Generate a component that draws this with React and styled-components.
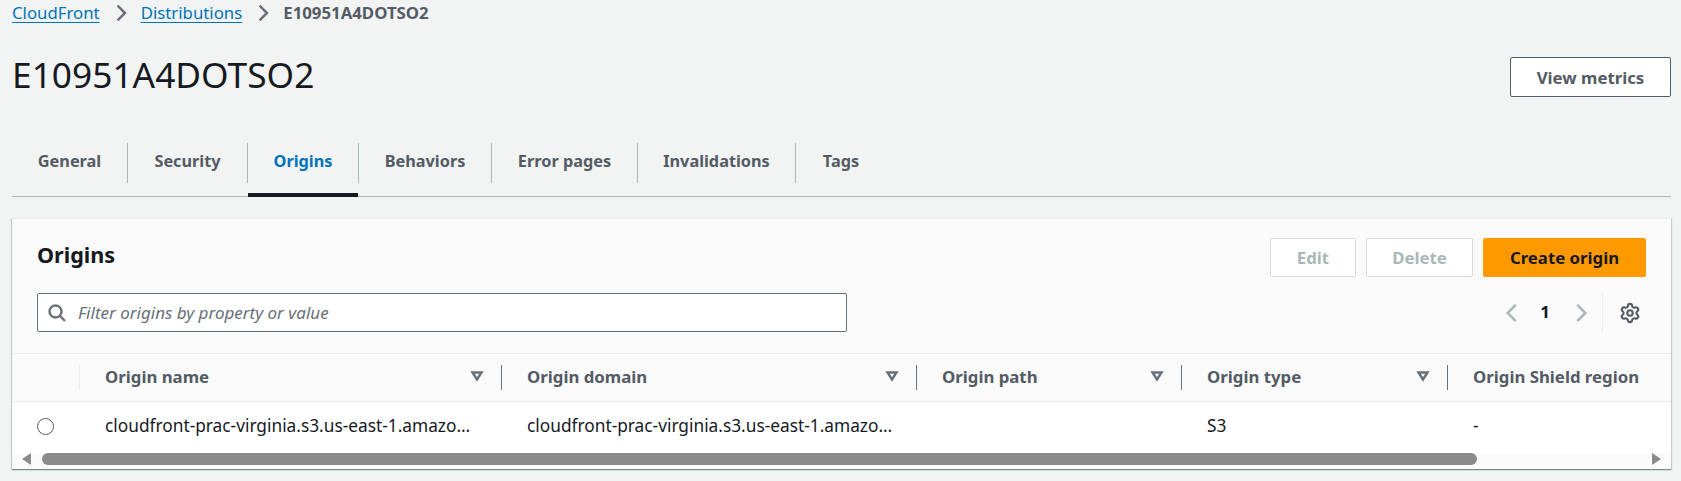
import React from 'react';
import styled, { createGlobalStyle } from 'styled-components';
import { Settings } from 'lucide-react';

const Global = createGlobalStyle`
  html, body { margin: 0; padding: 0; background: #f2f3f3; }
  body { font-family: "Noto Sans", "Open Sans", sans-serif; color: #16191f; font-size: 16.8px; }
  * { box-sizing: border-box; }
`;

const Page = styled.div`
  height: 481px;
  overflow: hidden;
  padding: 0 10px 0 12px;
`;

const Crumbs = styled.nav`
  display: flex;
  align-items: center;
  height: 26px;
  line-height: 22px;
`;

const CrumbLink = styled.a`
  color: #0073bb;
  text-decoration: underline;
  text-underline-offset: 3px;
`;

const CrumbCurrent = styled.span`
  color: #545b64;
  font-weight: 700;
`;

const CrumbSep = styled.svg`
  width: 18px;
  height: 18px;
  margin: 0 11px 0 12px;
  fill: none;
  stroke: #687078;
  stroke-width: 2.2;
`;

const Header = styled.header`
  display: flex;
  justify-content: space-between;
  align-items: flex-start;
  height: 117px;
  padding-top: 31px;
`;

const Title = styled.h1`
  margin: -1px 0 0;
  font-size: 35.3px;
  line-height: 36px;
  font-weight: 400;
  color: #16191f;
`;

const Button = styled.button`
  display: flex;
  align-items: center;
  justify-content: center;
  width: ${p => p.$w}px;
  height: ${p => p.$h || 39}px;
  padding: 0;
  font: 700 16.8px "Noto Sans", sans-serif;
  border-radius: 2px;
  border: 1px solid ${p => (p.$primary ? '#ff9900' : p.$disabled ? '#d5dbdb' : '#545b64')};
  background: ${p => (p.$primary ? '#ff9900' : '#fff')};
  color: ${p => (p.$primary ? '#16191f' : p.$disabled ? '#aab7b8' : '#545b64')};
`;

const Tabs = styled.div`
  display: flex;
  align-items: flex-start;
  height: 54px;
  border-bottom: 1px solid #aab7b8;
`;

const Tab = styled.div`
  position: relative;
  display: flex;
  align-items: center;
  justify-content: center;
  height: 40px;
  padding-bottom: 5px;
  width: ${p => p.$w}px;
  font-size: 16.3px;
  font-weight: 700;
  color: ${p => (p.$active ? '#0073bb' : '#545b64')};
  border-right: ${p => (p.$last ? 'none' : '1px solid #aab7b8')};
  &::before {
    content: '';
    position: absolute;
    left: 0;
    right: 0;
    top: 50px;
    height: 4px;
    background: ${p => (p.$active ? '#16191f' : 'transparent')};
  }
`;

const Card = styled.section`
  margin-top: 21px;
  height: 251px;
  background: #fafafa;
  border-top: 1px solid #eaeded;
  box-shadow: 0 1px 1px rgba(0, 28, 36, 0.3), 1px 1px 1px rgba(0, 28, 36, 0.15), -1px 1px 1px rgba(0, 28, 36, 0.15);
`;

const CardTop = styled.div`
  display: flex;
  justify-content: space-between;
  align-items: center;
  height: 39px;
  margin-top: 19px;
  padding: 0 25px;
`;

const CardTitle = styled.h2`
  margin: 0 0 6px;
  font-size: 21.6px;
  line-height: 28px;
  font-weight: 700;
  color: #16191f;
`;

const Actions = styled.div`
  display: flex;
  gap: 10px;
`;

const FilterRow = styled.div`
  display: flex;
  justify-content: space-between;
  align-items: flex-start;
  height: 40px;
  margin-top: 16px;
  padding: 0 30px 0 25px;
`;

const Filter = styled.div`
  display: flex;
  align-items: center;
  width: 810px;
  height: 39px;
  padding-left: 10px;
  background: #fff;
  border: 1px solid #687078;
  border-radius: 2px;
`;

const SearchIcon = styled.svg`
  width: 18px;
  height: 18px;
  margin-right: 12px;
  fill: none;
  stroke: #687078;
  stroke-width: 2.4;
`;

const FilterText = styled.span`
  font-style: italic;
  font-size: 17px;
  color: #687078;
`;

const Pager = styled.div`
  display: flex;
  align-items: center;
  height: 40px;
`;

const PageChevron = styled.svg`
  width: 20px;
  height: 20px;
  fill: none;
  stroke: #aab7b8;
  stroke-width: 2;
`;

const PageNumber = styled.span`
  width: 49px;
  padding: 0 3px 3px 0;
  text-align: center;
  font-weight: 700;
  color: #16191f;
`;

const PagerDivider = styled.div`
  height: 40px;
  width: 12px;
  border-right: 1px solid #eaeded;
`;

const Gear = styled(Settings)`
  width: 22px;
  height: 22px;
  margin-left: 16px;
  color: #545b64;
  stroke-width: 2.3;
`;

const columns = '68px 422px 415px 265px 266px 1fr';

const HeadRow = styled.div`
  display: grid;
  grid-template-columns: ${columns};
  height: 49px;
  margin-top: 20px;
  border-top: 1px solid #eaeded;
  border-bottom: 1px solid #eaeded;
  align-items: center;
`;

const HeadCell = styled.div`
  display: flex;
  align-items: center;
  justify-content: space-between;
  height: 25px;
  padding: 0 17px 3px ${p => (p.$first ? 0 : 25)}px;
  font-weight: 700;
  white-space: nowrap;
  color: #545b64;
  border-right: ${p => (p.$plain ? 'none' : `1px solid ${p.$faint ? '#eaeded' : '#687078'}`)};
`;

const Caret = styled.svg`
  width: 14px;
  height: 14px;
  fill: none;
  stroke: #687078;
  stroke-width: 2.4;
`;

const BodyRow = styled.div`
  display: grid;
  grid-template-columns: ${columns};
  align-items: center;
  height: 51px;
  padding-bottom: 2px;
  background: #fff;
`;

const BodyCell = styled.div`
  padding: 0 0 2px 25px;
  font-size: 17.3px;
  white-space: nowrap;
  color: #16191f;
`;

const RadioCell = styled.div`
  display: flex;
  padding-left: 25px;
`;

const Radio = styled.span`
  width: 17px;
  height: 17px;
  border-radius: 50%;
  border: 1.5px solid #545b64;
  background: #fff;
`;

const ScrollBar = styled.div`
  display: flex;
  align-items: center;
  height: 15px;
  padding: 0 10px 3px 10px;
  background: #fafafa;
`;

const ScrollArrow = styled.svg`
  width: 10px;
  height: 12px;
  fill: #8a8a8a;
  flex: none;
`;

const ScrollTrack = styled.div`
  flex: 1;
  padding-left: 10px;
`;

const ScrollThumb = styled.div`
  height: 12px;
  width: ${p => p.$w}px;
  background: #8a8a8a;
  border-radius: 6px;
`;

const tabs = [
  ['General', 116],
  ['Security', 120],
  ['Origins', 111, true],
  ['Behaviors', 133],
  ['Error pages', 146],
  ['Invalidations', 158],
  ['Tags', 90],
];

const heads = [
  ['Origin name', 1],
  ['Origin domain', 1],
  ['Origin path', 1],
  ['Origin type', 1],
  ['Origin Shield region', 0],
];

const cells = [
  'cloudfront-prac-virginia.s3.us-east-1.amazo…',
  'cloudfront-prac-virginia.s3.us-east-1.amazo…',
  '',
  'S3',
  '-',
];

const Chevron = ({ as: Comp, left }) => (
  <Comp viewBox="0 0 16 16">
    <path d={left ? 'M11 1.5 4.5 8l6.5 6.5' : 'M5 1.5 11.5 8 5 14.5'} />
  </Comp>
);

export default function App() {
  return (
    <Page>
      <Global />
      <Crumbs>
        <CrumbLink>CloudFront</CrumbLink>
        <Chevron as={CrumbSep} />
        <CrumbLink>Distributions</CrumbLink>
        <Chevron as={CrumbSep} />
        <CrumbCurrent>E10951A4DOTSO2</CrumbCurrent>
      </Crumbs>

      <Header>
        <Title>E10951A4DOTSO2</Title>
        <Button $w={161} $h={40}>View metrics</Button>
      </Header>

      <Tabs>
        {tabs.map(([label, w, active], i) => (
          <Tab key={label} $w={w} $active={active} $last={i === tabs.length - 1}>{label}</Tab>
        ))}
      </Tabs>

      <Card>
        <CardTop>
          <CardTitle>Origins</CardTitle>
          <Actions>
            <Button $w={86} $disabled>Edit</Button>
            <Button $w={107} $disabled>Delete</Button>
            <Button $w={163} $primary>Create origin</Button>
          </Actions>
        </CardTop>

        <FilterRow>
          <Filter>
            <SearchIcon viewBox="0 0 18 18">
              <circle cx="7.5" cy="7.5" r="6" />
              <path d="m12 12 5 5" />
            </SearchIcon>
            <FilterText>Filter origins by property or value</FilterText>
          </Filter>
          <Pager>
            <Chevron as={PageChevron} left />
            <PageNumber>1</PageNumber>
            <Chevron as={PageChevron} />
            <PagerDivider />
            <Gear />
          </Pager>
        </FilterRow>

        <HeadRow>
          <HeadCell $first $faint />
          {heads.map(([label, sortable]) => (
            <HeadCell key={label} $plain={!sortable}>
              {label}
              {sortable ? (
                <Caret viewBox="0 0 14 14">
                  <path d="M2.5 3.5h9L7 10.5z" />
                </Caret>
              ) : null}
            </HeadCell>
          ))}
        </HeadRow>

        <BodyRow>
          <RadioCell><Radio /></RadioCell>
          {cells.map((text, i) => (
            <BodyCell key={i}>{text}</BodyCell>
          ))}
        </BodyRow>

        <ScrollBar>
          <ScrollArrow viewBox="0 0 10 12"><path d="M9 0v12L0 6z" /></ScrollArrow>
          <ScrollTrack><ScrollThumb $w={1435} /></ScrollTrack>
          <ScrollArrow viewBox="0 0 10 12"><path d="M1 0v12l9-6z" /></ScrollArrow>
        </ScrollBar>
      </Card>
    </Page>
  );
}
